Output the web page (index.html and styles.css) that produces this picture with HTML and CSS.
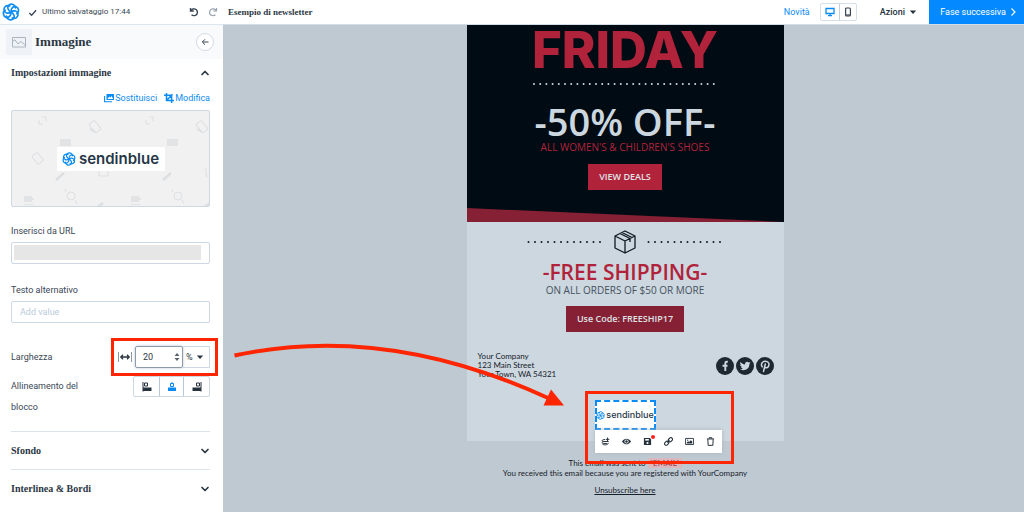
FILE: index.html
```html
<!DOCTYPE html>
<html lang="it">
<head>
<meta charset="utf-8">
<meta name="viewport" content="width=device-width, initial-scale=1">
<title>Esempio di newsletter</title>
<link rel="stylesheet" href="styles.css">
</head>
<body>
<svg class="defs" aria-hidden="true">
  <symbol id="rosette" viewBox="0 0 24 24">
    <g fill="none" stroke="currentColor" stroke-width="2.200" stroke-linecap="round">
      <path id="leaf" d="M12 12C7.500 10 6.500 5 9.500 2.600C12.500 0.300 17.500 1.800 18 6.500"/>
      <use href="#leaf" transform="rotate(60 12 12)"/>
      <use href="#leaf" transform="rotate(120 12 12)"/>
      <use href="#leaf" transform="rotate(180 12 12)"/>
      <use href="#leaf" transform="rotate(240 12 12)"/>
      <use href="#leaf" transform="rotate(300 12 12)"/>
    </g>
  </symbol>
  <symbol id="chevron" viewBox="0 0 10 10"><path d="M2 3.500L5 6.500L8 3.500" fill="none" stroke="currentColor" stroke-width="1.700" stroke-linecap="round" stroke-linejoin="round"/></symbol>
  <symbol id="caret" viewBox="0 0 10 10"><path d="M1 3h8L5 7.500z" fill="currentColor"/></symbol>
</svg>

<header class="topbar">
  <a class="brand" href="#" aria-label="Sendinblue"><svg class="icon-18"><use href="#rosette"/></svg></a>
  <span class="saved">
    <svg class="icon-9" viewBox="0 0 10 10"><path d="M1.500 5.500L4 8L9 2.500" fill="none" stroke="currentColor" stroke-width="1.500"/></svg>
    Ultimo salvataggio 17:44
  </span>
  <span class="history">
    <button type="button" aria-label="Annulla"><svg class="icon-10" viewBox="0 0 10 10"><path d="M1.500 1v3h3.300M1.700 4C2.500 2.500 4 1.600 5.500 1.900C9 2.500 9.300 7.300 6.500 8.300C5 8.900 3.500 8.600 2.500 7.800" fill="none" stroke="currentColor" stroke-width="1.400"/></svg></button>
    <button class="muted" type="button" aria-label="Ripeti"><svg class="icon-10" viewBox="0 0 10 10"><path d="M8.500 1v3H5.200M8.300 4C7.500 2.500 6 1.600 4.500 1.900C1 2.500 .7 7.300 3.500 8.300C5 8.900 6.500 8.600 7.500 7.800" fill="none" stroke="currentColor" stroke-width="1.200"/></svg></button>
  </span>
  <h1 class="doc-title">Esempio di newsletter</h1>
  <a class="news" href="#">Novità</a>
  <span class="devices">
    <button class="on" type="button" aria-label="Desktop"><svg class="icon-10" viewBox="0 0 10 10"><path d="M1 1.500h8v5H1zM5 6.500v2M3 8.700h4" fill="none" stroke="currentColor" stroke-width="1.300"/></svg></button>
    <button type="button" aria-label="Mobile"><svg class="icon-10" viewBox="0 0 10 10"><rect x="2.600" y="1" width="4.800" height="8" rx="1" fill="none" stroke="currentColor" stroke-width="1.200"/><path d="M3 8h4" stroke="currentColor" stroke-width="1.200"/></svg></button>
  </span>
  <button class="actions" type="button">Azioni <svg class="icon-8"><use href="#caret"/></svg></button>
  <button class="next" type="button">Fase successiva <svg class="icon-8" viewBox="0 0 8 8"><path d="M2.500 .5L6 4L2.500 7.500" fill="none" stroke="currentColor" stroke-width="1.100"/></svg></button>
</header>

<main class="workspace">
  <aside class="sidebar">
    <div class="panel-head">
      <span class="panel-icon"><svg class="icon-14" viewBox="0 0 14 12"><path d="M.5 1.500h13v9.500H.5zM.5 5.500L3 3.800L6 8L9 5.500L13.500 9.500" fill="none" stroke="currentColor"/></svg></span>
      <h2>Immagine</h2>
      <button class="back" type="button" aria-label="Indietro"><svg class="icon-8" viewBox="0 0 8 8"><path d="M7.500 4h-6M4 1.300L1.300 4L4 6.700" fill="none" stroke="currentColor"/></svg></button>
    </div>

    <div class="panel-body">
      <button class="section open" type="button">Impostazioni immagine <svg class="icon-10 flip"><use href="#chevron"/></svg></button>

      <div class="links">
        <a href="#"><svg class="icon-10" viewBox="0 0 10 10"><path d="M2.500 1h7.500v6h-7.500z" fill="currentColor"/><path d="M.6 3v5.700h7.400" fill="none" stroke="currentColor" stroke-width="1.100"/><path d="M3.300 6L5.300 3.600L6.300 4.800L7.500 3L9.300 6z" fill="#fff"/></svg>Sostituisci</a>
        <a href="#"><svg class="icon-10" viewBox="0 0 10 10"><path d="M2.500 0v7.500h7.500M0 2.200h7.600v7.800M3 7L8.500 1.300" fill="none" stroke="currentColor" stroke-width="1.500"/></svg>Modifica</a>
      </div>

      <div class="preview">
        <svg class="preview-pattern" aria-hidden="true">
          <defs>
            <pattern id="stationery" width="107" height="97" patternUnits="userSpaceOnUse">
              <g fill="none" stroke="#dcdfe2" stroke-width="1">
                <path d="M30 6h4v4M27 9v4h4"/>
                <rect x="79" y="10" width="7" height="11" rx="1" transform="rotate(-40 83 15)"/>
                <path d="M78 18l5 3" stroke-width="2"/>
                <rect x="22" y="42" width="7" height="10" rx="1" transform="rotate(-40 26 47)"/>
                <path d="M87 57v8h9v-8"/>
                <path d="M44 69l8-7" stroke-width="2.500"/>
                <circle cx="59" cy="85" r="4"/><path d="M54 81l-1-3M63 89l2 4"/>
                <path d="M84 97l7-5" stroke-width="2.500"/>
              </g>
              <path d="M48 28h11v7H48zM12 85h8v6h-8zM20 87h2v2h-2zM12 93h9v1h-9z" fill="#e1e3e5"/>
            </pattern>
          </defs>
          <rect width="100%" height="100%" fill="url(#stationery)"/>
        </svg>
        <span class="logo-card"><svg class="icon-14"><use href="#rosette"/></svg>sendinblue</span>
      </div>

      <label class="field-label" for="url">Inserisci da URL</label>
      <div class="field"><input id="url" type="text"><span class="redacted"></span></div>

      <label class="field-label" for="alt">Testo alternativo</label>
      <div class="field"><input id="alt" type="text" placeholder="Add value"></div>

      <div class="row width-row">
        <label for="width">Larghezza</label>
        <div class="width-control">
          <svg class="icon-14" viewBox="0 0 14 10"><path d="M.5 0v10M13.500 0v10" stroke="#8b97a3"/><path d="M3 5h8M5 2.800L2.800 5L5 7.200M9 2.800L11.200 5L9 7.200" fill="none" stroke="currentColor" stroke-width="1.300"/></svg>
          <span class="number">
            <input id="width" type="number" value="20">
            <svg class="spinner" viewBox="0 0 6 10"><path d="M.5 4h5L3 1zM.5 6h5L3 9z" fill="#59636e"/></svg>
          </span>
          <span class="unit">
            <select aria-label="Unità"><option>%</option><option>px</option></select>
            <svg class="icon-8"><use href="#caret"/></svg>
          </span>
          <span class="callout callout-width"></span>
        </div>
      </div>

      <div class="row align-row">
        <span class="align-label">Allineamento del blocco</span>
        <div class="segments">
          <button type="button" aria-label="Sinistra"><svg class="icon-10" viewBox="0 0 10 10"><path d="M1 0v9.500" stroke="currentColor" stroke-width="1"/><path d="M2.500 1h3v3h-3z" fill="none" stroke="currentColor"/><path d="M1 5.500h8.500V9H1z" fill="currentColor"/></svg></button>
          <button class="on" type="button" aria-label="Centro"><svg class="icon-10" viewBox="0 0 10 10"><path d="M5 0v1M3.500 1.500h3v3h-3z" fill="none" stroke="currentColor"/><path d="M1 5.500h8V9H1z" fill="currentColor"/></svg></button>
          <button type="button" aria-label="Destra"><svg class="icon-10" viewBox="0 0 10 10"><path d="M9 0v9.500" stroke="currentColor" stroke-width="1"/><path d="M4.500 1h3v3h-3z" fill="none" stroke="currentColor"/><path d="M.5 5.500H9V9H.5z" fill="currentColor"/></svg></button>
        </div>
      </div>

      <button class="section ruled" type="button">Sfondo <svg class="icon-10"><use href="#chevron"/></svg></button>
      <button class="section ruled" type="button">Interlinea &amp; Bordi <svg class="icon-10"><use href="#chevron"/></svg></button>
    </div>
  </aside>

  <section class="canvas">
    <article class="email">
      <div class="hero">
        <p class="friday">FRIDAY</p>
        <svg class="dots-hero" viewBox="0 0 184 2"><path d="M1 1h183" stroke="#ccd7df" stroke-width="2" stroke-linecap="round" stroke-dasharray="0 6.200"/></svg>
        <p class="discount">-50% OFF-</p>
        <p class="audience">ALL WOMEN'S &amp; CHILDREN'S SHOES</p>
        <a class="cta bright" href="#">VIEW DEALS</a>
        <svg class="slant" viewBox="0 0 316 14" preserveAspectRatio="none"><path d="M0 0L316 14H0z" fill="#862034"/></svg>
      </div>
      <div class="shipping">
        <div class="divider">
          <svg class="dots" viewBox="0 0 76 2"><path d="M1.500 1h75" stroke="#121c24" stroke-width="2" stroke-linecap="round" stroke-dasharray="0 6.500"/></svg>
          <svg class="box" viewBox="0 0 22 24"><path d="M11 1L21 6V18L11 23L1 18V6zM1 6L11 11L21 6M11 11V23M6 3.500L16 8.500V12M8 2.500L18 7.500" fill="none" stroke="#101a22" stroke-width="1.300" stroke-linejoin="round"/></svg>
          <svg class="dots" viewBox="0 0 76 2"><path d="M1.500 1h75" stroke="#121c24" stroke-width="2" stroke-linecap="round" stroke-dasharray="0 6.500"/></svg>
        </div>
        <p class="free">-FREE SHIPPING-</p>
        <p class="orders">ON ALL ORDERS OF $50 OR MORE</p>
        <a class="cta dark" href="#">Use Code: FREESHIP17</a>
        <div class="contact">
          <address>Your Company<br>123 Main Street<br>Your Town, WA 54321</address>
          <div class="social">
            <a href="#" aria-label="Facebook"><svg class="icon-18" viewBox="0 0 18 18"><circle cx="9" cy="9" r="9" fill="#1d2830"/><path d="M11.800 4.800H10.600C9.600 4.800 9.300 5.400 9.300 6.200V14M6.500 8.700h5" fill="none" stroke="#ccd7df" stroke-width="1.900"/></svg></a>
            <a href="#" aria-label="Twitter"><svg class="icon-18" viewBox="0 0 18 18"><circle cx="9" cy="9" r="9" fill="#1d2830"/><path d="M14.500 5.800c-.4.200-.8.300-1.200.4.500-.3.800-.7.900-1.200-.4.200-.9.400-1.400.5-1.500-1.600-4.100-.4-3.700 1.900C7.300 7.300 5.700 6.500 4.500 5c-.7 1.200-.3 2.300.6 3-.3 0-.6-.1-.9-.3 0 1 .7 1.900 1.700 2.200-.3.100-.6.100-.9 0 .3.900 1.100 1.500 2 1.500-.9.700-2 1-3.100.9 4.100 2.500 9.600.2 9.500-5.200.4-.3.800-.8 1.100-1.300z" fill="#ccd7df"/></svg></a>
            <a href="#" aria-label="Pinterest"><svg class="icon-18" viewBox="0 0 18 18"><circle cx="9" cy="9" r="9" fill="#1d2830"/><path d="M6.200 9.800C4.500 7.500 6 4.300 9.300 4.300C12.300 4.300 13.500 6.500 12.700 8.700C12 10.900 9.600 11.500 8.700 10M9.300 7L7.500 14.500" fill="none" stroke="#ccd7df" stroke-width="1.500" stroke-linecap="round"/></svg></a>
          </div>
        </div>
        <div class="selected">
          <span class="logo-small"><svg class="icon-9"><use href="#rosette"/></svg>sendinblue</span>
          <div class="toolbar">
            <button type="button" aria-label="Sposta"><svg class="icon-9" viewBox="0 0 10 10"><path d="M4.500 2.800C1.500 2.800 .5 4 2 5H8.500M2 5C.5 6 1.500 7.200 3 7.200H6.500M1.500 7.500C2 9.200 7.500 9.400 8.300 6.500M7.300 .6v4M5.300 2.600h4" fill="none" stroke="currentColor" stroke-width="1.100"/></svg></button>
            <button type="button" aria-label="Mostra"><svg class="icon-9" viewBox="0 0 10 10"><path d="M0 5C2.500 .8 7.500 .8 10 5C7.500 9.200 2.500 9.200 0 5z" fill="currentColor"/><circle cx="5" cy="5" r="2.300" fill="#fff"/><circle cx="5" cy="5" r="1.400" fill="currentColor"/></svg></button>
            <button class="alert" type="button" aria-label="Salva"><svg class="icon-9" viewBox="0 0 10 10"><path d="M1 1h6.500L9 2.500V9H1z" fill="currentColor"/><path d="M2.500 2.200h4v1.800h-4z" fill="#fff"/><circle cx="5" cy="6.700" r="1.200" fill="#fff"/></svg></button>
            <button type="button" aria-label="Link"><svg class="icon-9" viewBox="0 0 10 10"><g fill="none" stroke="currentColor" stroke-width="1.200"><rect x="4.600" y="1.300" width="5" height="3.600" rx="1.800" transform="rotate(-45 7 3)"/><rect x=".5" y="5.100" width="5" height="3.600" rx="1.800" transform="rotate(-45 3 7)"/><path d="M3.800 6.200L6.200 3.800"/></g></svg></button>
            <button type="button" aria-label="Immagine"><svg class="icon-9" viewBox="0 0 10 10"><path d="M.6 1.600h8.800v6.800H.6z" fill="none" stroke="currentColor"/><path d="M2 7.300V6l1.500-1.300L4.500 5.500L6.500 3.500L8 5v2.300z" fill="currentColor"/><circle cx="3" cy="3.500" r=".7" fill="currentColor"/></svg></button>
            <button type="button" aria-label="Elimina"><svg class="icon-9" viewBox="0 0 10 10"><path d="M1 2.200h8M3.500 2V.8h3V2M2 2.500L2.400 9.300H7.600L8 2.500" fill="none" stroke="currentColor" stroke-width="1.100"/></svg></button>
          </div>
          <span class="callout callout-logo"></span>
        </div>
        <svg class="arrow" viewBox="0 0 334 64" aria-hidden="true"><path d="M1.500 13.500Q152 -19 315 56" fill="none" stroke="#fe2502" stroke-width="4"/><path d="M318 47.500L331 63.500H310.500z" fill="#fe2502"/></svg>
      </div>
      <footer class="legal">
        <p>This email was sent to <mark>*EMAIL*</mark></p>
        <p>You received this email because you are registered with YourCompany</p>
        <a href="#">Unsubscribe here</a>
      </footer>
    </article>
  </section>
</main>
</body>
</html>
```

FILE: styles.css
```css
* { box-sizing: border-box; margin: 0; padding: 0; }

body {
  display: flex;
  flex-direction: column;
  height: 100vh;
  overflow: hidden;
  font-family: Roboto, "Liberation Sans", sans-serif;
  font-size: 9px;
  line-height: 12px;
  color: #3a4755;
  background: #fff;
}

button, input, select { font: inherit; color: inherit; background: none; border: 0; outline: 0; }
a { color: #0b8cf5; text-decoration: none; }
svg { display: block; flex: none; }
.defs { position: absolute; width: 0; height: 0; }
.icon-8 { width: 8px; height: 8px; }
.icon-9 { width: 9px; height: 9px; }
.icon-10 { width: 10px; height: 10px; }
.icon-14 { width: 14px; height: 14px; }
.icon-18 { width: 18px; height: 18px; }

/* Top bar */
.topbar { display: flex; align-items: center; flex: none; height: 24px; padding-left: 2px; }
.brand { margin-right: 8px; }
.saved { display: flex; align-items: center; gap: 5px; width: 161px; font-size: 8px; white-space: nowrap; }
.history { display: flex; gap: 9px; width: 39px; }
.muted { color: #9aa5b0; }
.doc-title { flex: 1; font: bold 9px/12px "Liberation Serif", serif; color: #2b3743; }
.news { margin-right: 10px; }
.devices { display: flex; height: 18px; margin-right: 23px; border: 1px solid #d5dfe8; border-radius: 2px; }
.devices button { display: flex; align-items: center; justify-content: center; width: 16px; }
.devices .on { width: 19px; color: #0b8cf5; border-right: 1px solid #c3cfdb; }
.actions { display: flex; align-items: center; gap: 4px; margin-right: 12px; font-weight: 500; color: #26323d; }
.next { display: flex; align-items: center; justify-content: flex-end; gap: 3px; width: 95px; height: 24px; padding-right: 7px; color: #fff; background: #0589ff; }

/* Sidebar */
.workspace { display: flex; flex: 1; min-height: 0; }
.sidebar { width: 223px; flex: none; border-top: 1px solid #dbe6f0; }
.panel-head { display: flex; align-items: center; height: 34px; padding: 0 9px 0 6px; background: #f8fafc; }
.panel-icon { display: flex; align-items: center; justify-content: center; width: 26px; height: 26px; color: #aab4bd; background: #eff3f7; }
.panel-head h2 { flex: 1; padding-left: 3px; font: bold 13px/16px "Liberation Serif", serif; color: #2b3743; }
.back { display: flex; align-items: center; justify-content: center; width: 18px; height: 18px; border: 1px solid #d3dbe3; border-radius: 50%; background: #fff; }
.panel-body { display: flex; flex-direction: column; padding: 0 13px 0 11px; }
.section { display: flex; align-items: center; justify-content: space-between; height: 38px; font: bold 10px/14px "Liberation Serif", serif; color: #2b3743; }
.open { height: 27px; }
.flip { transform: rotate(180deg); }
.ruled { border-top: 1px solid #dbe4ed; }
.links { display: flex; justify-content: flex-end; gap: 7px; margin: 6px 0; }
.links a { display: flex; align-items: center; gap: 1px; }
.preview { position: relative; display: flex; align-items: center; justify-content: center; height: 97px; border: 1px solid #ccd8e4; border-radius: 2px; background: #f1f1f1; }
.preview-pattern { position: absolute; inset: 0; width: 100%; height: 100%; }
.logo-card { position: relative; display: flex; align-items: center; justify-content: center; gap: 3px; width: 108px; height: 24px; background: #fff; font: 600 15px/18px Inter, sans-serif; color: #253746; }
.logo-card svg, .logo-small svg, .brand svg { color: #0b8cf5; }
.field-label { margin: 18px 0 5px; }
.field { position: relative; display: flex; margin-bottom: 2px; }
.field input { width: 100%; height: 22px; padding: 0 8px; border: 1px solid #ccd8e4; border-radius: 2px; }
.field input::placeholder { color: #b9cbdb; opacity: 1; }
.redacted { position: absolute; inset: 3px 9px 4px 3px; background: #e6e6e7; }
.row { display: flex; justify-content: space-between; }
.width-row { align-items: center; margin-top: 21px; }
.width-control { position: relative; display: flex; align-items: center; gap: 3px; color: #2b3743; }
.number { display: flex; align-items: center; width: 48px; height: 22px; padding-right: 2px; border: 1px solid #8d9ba8; border-radius: 2px; box-shadow: 0 0 3px #b7c3ce; }
.number input { flex: 1; min-width: 0; padding-left: 7px; appearance: textfield; }
.number input::-webkit-inner-spin-button { display: none; }
.spinner { width: 6px; height: 10px; }
.unit { display: flex; align-items: center; justify-content: space-between; width: 28px; height: 22px; padding: 0 5px 0 4px; margin-left: -4px; border: 1px solid #ccd8e4; border-left: 0; }
.unit select { width: 10px; appearance: none; }
.callout { position: absolute; border: 3px solid #fe2502; pointer-events: none; }
.callout-width { inset: -8px -8px -8px -7px; }
.align-row { margin: 8px 0 13px; }
.align-label { width: 80px; line-height: 21px; }
.segments { display: flex; height: 21px; border: 1px solid #ccd8e4; border-radius: 2px; color: #26323d; }
.segments button { display: flex; align-items: center; justify-content: center; width: 25px; }
.segments .on { color: #0b8cf5; border: solid #b8c9d9; border-width: 0 1px; }

/* Newsletter canvas */
.canvas { flex: 1; min-width: 0; padding-left: 3px; overflow: hidden; border-top: 1px solid #d3dde5; background: #bfc9d2; }
.email { width: 100%; max-width: 317px; margin: 0 auto; font-family: "Trebuchet MS", "Open Sans", sans-serif; color: #16212b; text-align: center; }
.hero { display: flex; flex-direction: column; align-items: center; color: #b1233b; background: #010b13; }
.friday { height: 58px; font: 800 51px/50px Inter, sans-serif; }
.dots-hero { width: 184px; height: 2px; }
.discount { margin-top: 16px; font-size: 38px; font-weight: 600; line-height: 40px; color: #ccd7df; }
.audience { font-size: 10px; line-height: 13px; }
.cta { display: flex; align-items: center; height: 26px; padding: 0 11px; font-size: 9px; font-weight: 600; color: #dfe3e8; }
.bright { margin: 10px 0 18px; background: #b1233b; }
.dark { margin-top: 10px; background: #862034; }
.slant { width: 100%; height: 14px; }
.shipping { position: relative; display: flex; flex-direction: column; align-items: center; background: #ccd7df; }
.divider { display: flex; align-items: center; gap: 11px; margin-top: 8px; }
.dots { width: 76px; height: 2px; }
.box { width: 22px; height: 24px; }
.free { margin-top: 6px; font-size: 21px; font-weight: 600; line-height: 24px; color: #b1233b; }
.orders { font-size: 10px; line-height: 12px; color: #45525d; }
.contact { display: flex; align-items: center; align-self: stretch; justify-content: space-between; padding: 20px 10px 21px 11px; }
.contact address { font: 8px/9px "Trebuchet MS", Lato, sans-serif; text-align: left; }
.social { display: flex; gap: 2px; }
.selected { position: relative; align-self: flex-start; height: 41px; margin-left: 128px; }
.logo-small { display: flex; align-items: center; justify-content: center; gap: 1px; width: 61px; height: 30px; border: 2px dashed #0b8cf5; background: #fff; font: 500 9px/10px Inter, sans-serif; color: #253746; }
.toolbar { position: absolute; top: 30px; left: 0; display: flex; align-items: center; width: 127px; height: 23px; background: #fff; box-shadow: 0 0 4px #aab5bf; color: #26323d; }
.toolbar button { position: relative; display: flex; flex: 1; justify-content: center; }
.alert::after { content: ""; position: absolute; top: -2px; right: 3px; width: 4px; height: 4px; border-radius: 50%; background: #f22; }
.callout-logo { top: -9px; left: -10px; width: 149px; height: 73px; }
.arrow { position: absolute; top: 120px; left: -234px; width: 334px; height: 64px; }
.legal { padding-top: 17px; font: 8px/10px "Trebuchet MS", Lato, sans-serif; white-space: nowrap; }
.legal mark { padding: 0 2px; color: #a3303c; background: #dbb8c0; }
.legal a { display: inline-block; margin-top: 7px; color: inherit; text-decoration: underline; }
```
